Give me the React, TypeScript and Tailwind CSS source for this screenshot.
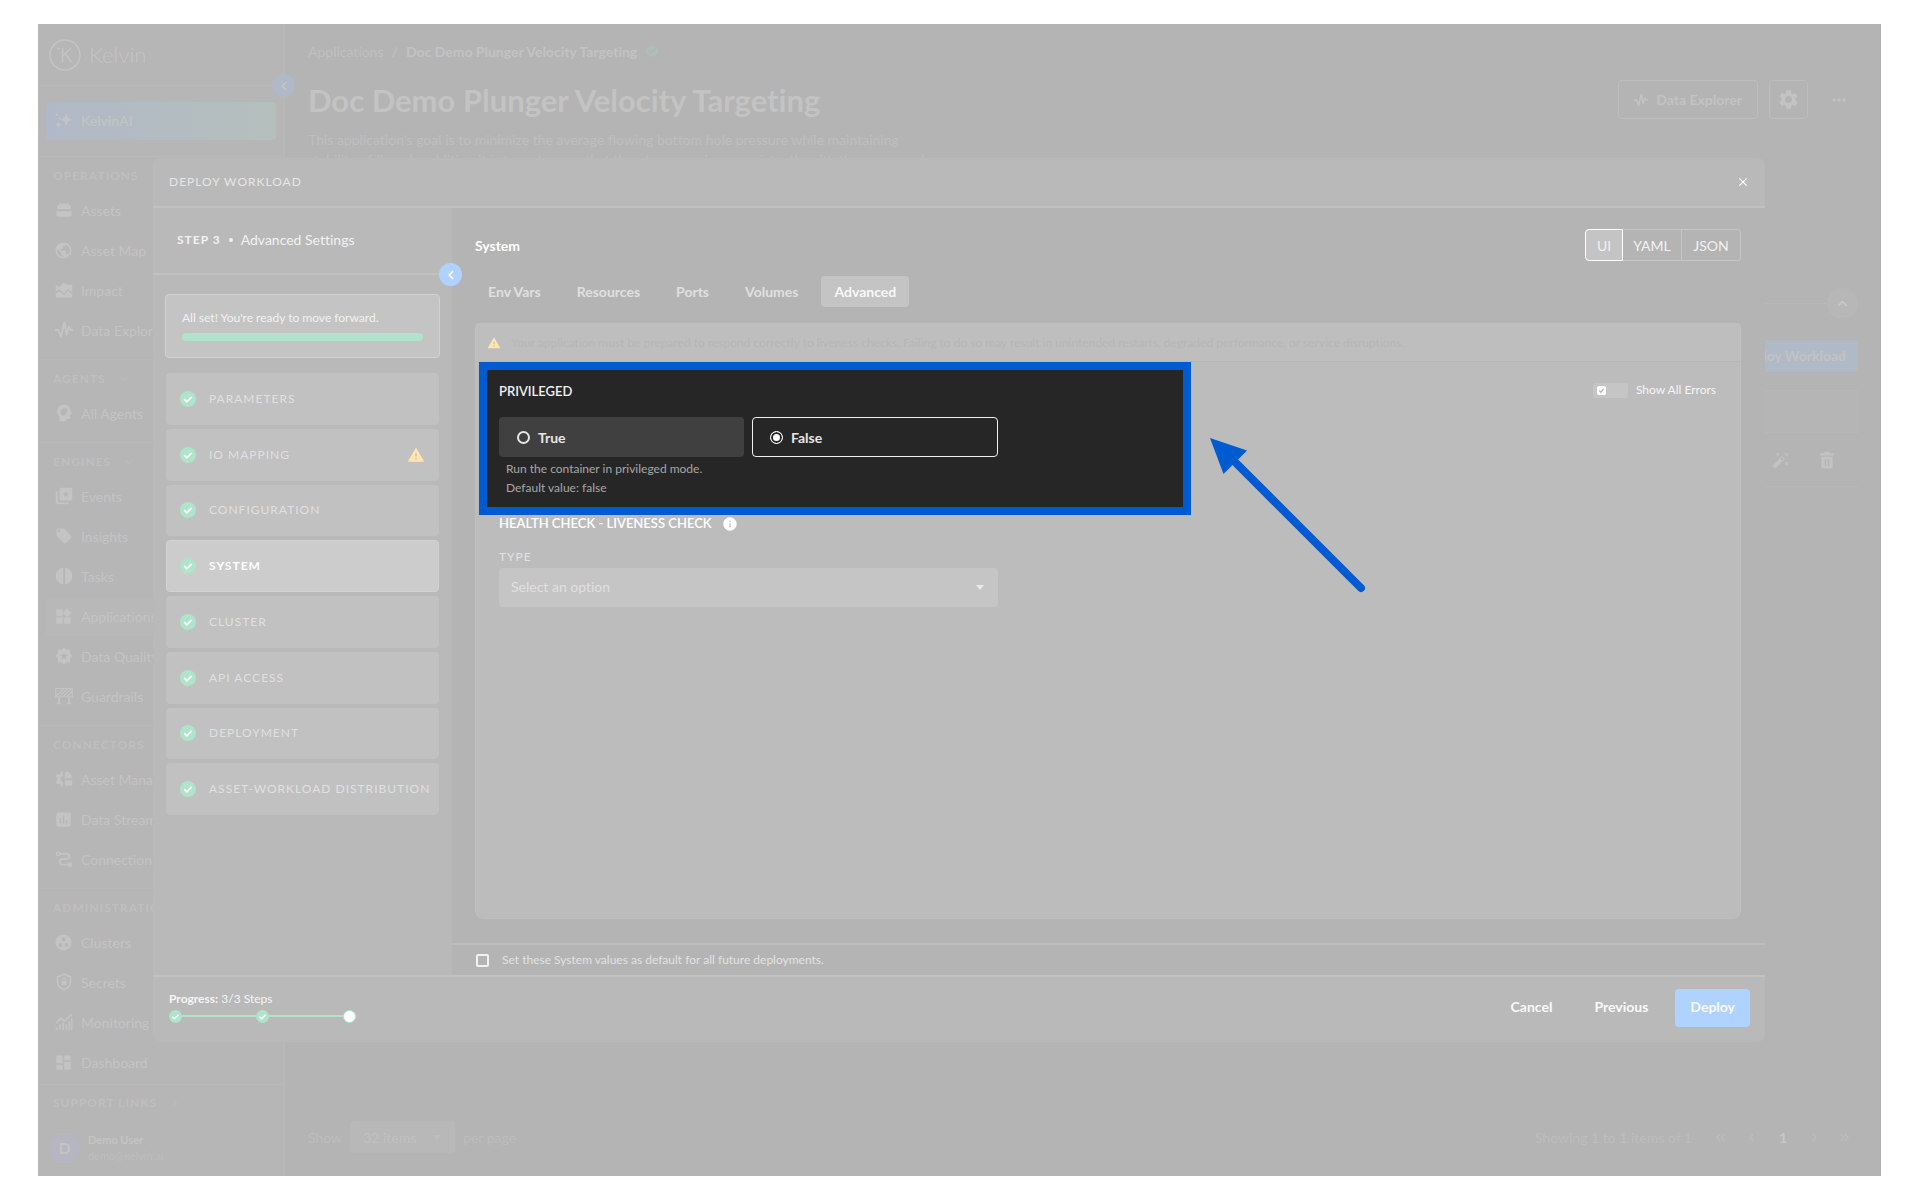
import React from "react";
import type { ReactNode } from "react";
import {
  MdAssessment,
  MdAutoFixHigh,
  MdCheckCircle,
  MdClose,
  MdDashboard,
  MdGroupWork,
  MdInfo,
  MdLocalOffer,
  MdMoreHoriz,
  MdPublic,
  MdSettings,
  MdWarning,
  MdWidgets,
} from "react-icons/md";
import { ChevronDown, ChevronLeft, ChevronRight, ChevronUp, ChevronsLeft, ChevronsRight } from "lucide-react";

function Icon({ children, size = 18 }: { children: ReactNode; size?: number }) {
  return (
    <svg width={size} height={size} viewBox="0 0 24 24" fill="currentColor" aria-hidden="true">
      {children}
    </svg>
  );
}

const AssetsIcon = () => (
  <Icon>
    <path d="M3 11V7a2 2 0 0 1 2-2h1V3h3v2h1.500V3h3v2H15V3h3v2h1a2 2 0 0 1 2 2v4zM2 13.500h20V19a2 2 0 0 1-2 2H4a2 2 0 0 1-2-2z" />
  </Icon>
);
const ImpactIcon = () => (
  <Icon>
    <path d="M1 5l5 3 5-6 6 3h6v10l-6-4-5 5.500L6 11l-5 3z" />
    <path d="M1 22v-5l5-3.500 6 5.500 5.500-6L23 17.500V22z" />
  </Icon>
);
const PulseIcon = ({ size = 18 }: { size?: number }) => (
  <Icon size={size}>
    <path
      d="M0 12h4.500l3.500 9 4.500-19 3 16 3-10 2.500 4H24"
      fill="none"
      stroke="currentColor"
      strokeWidth="2.600"
      strokeLinejoin="round"
    />
  </Icon>
);
const AgentIcon = () => (
  <Icon>
    <path
      fillRule="evenodd"
      d="M12 1c-5 0-9 3.700-9 8.700 0 3 1.300 5.300 3 7V23h9v-3h2.500a2.500 2.500 0 0 0 2.500-2.500V14l2.300-.800c.500-.2.600-.700.300-1.200L21 9.500C20.700 4.700 17 1 12 1zm4.500 4.500c.4 4.500-1 8-4 9.500-1.500.7-3 .3-4-.5-1.500-2-1.700-4.500-.3-6.500 1.800-2.300 5-2.300 8.300-2.500z"
    />
  </Icon>
);
const EventsIcon = () => (
  <Icon>
    <path d="M1 6h2.500v12.500a2 2 0 0 0 2 2H18V23H4a3 3 0 0 1-3-3z" />
    <path
      fillRule="evenodd"
      d="M8 1h13a2 2 0 0 1 2 2v13a2 2 0 0 1-2 2H8a2 2 0 0 1-2-2V3a2 2 0 0 1 2-2zm6.500 4l-1.200 3-3.300.2 2.500 2.100-.8 3.200 2.800-1.700 2.800 1.700-.8-3.200L19 8.200 15.700 8z"
    />
  </Icon>
);
const TasksIcon = () => (
  <Icon>
    <path d="M11 1v22H9l-6-4-2-5v-4l2-5 6-4zM13.500 1v22H15l6-4 2-5v-4l-2-5-6-4z" />
  </Icon>
);
const QualityIcon = () => (
  <Icon>
    <path
      fillRule="evenodd"
      d="M12 0.500l3.200 3.300h4.900v4.900L23.500 12l-3.400 3.300v4.900h-4.900L12 23.500l-3.200-3.300H3.900v-4.900L0.500 12l3.400-3.300V3.800h4.900zM12 6.500l-1.500 3.700-4 .3 3.100 2.500-1 3.900L12 14.800l3.400 2.100-1-3.900 3.100-2.500-4-.3z"
    />
  </Icon>
);
const BarrierIcon = () => (
  <Icon>
    <path d="M4 13h2.500v8H8v2H2.500v-2H4zM17.500 13H20v8h1.500v2H16v-2h1.500z" />
    <path d="M1.500 12L11 3M6 12.500L16 3M11 12.500L21 3M16 12.500L23 6" stroke="currentColor" strokeWidth="1.800" />
    <path d="M1 2h22v11H1z" fill="none" stroke="currentColor" strokeWidth="1.500" />
  </Icon>
);
const AssetManagerIcon = () => (
  <Icon>
    <path d="M10.500 2v5.500a4.700 4.700 0 0 0 0 9V22H8l-.600-3-1.800-1-2.800 1L.8 15.500 3 13.500v-3L.8 8.500 2.800 5l2.800 1 1.800-1L8 2z" />
    <path d="M13 3.500l4-1.500 5 4.500V11h-9zM13 13.500h10V19a2 2 0 0 1-2 2h-8z" />
  </Icon>
);
const ConnectionsIcon = () => (
  <Icon>
    <path
      d="M6 5h9.500a3.500 3.500 0 0 1 0 7H10a3.500 3.500 0 0 0 0 7.500h8"
      fill="none"
      stroke="currentColor"
      strokeWidth="2.400"
    />
    <circle cx="4" cy="5" r="2.300" fill="none" stroke="currentColor" strokeWidth="1.800" />
    <circle cx="20" cy="19.500" r="3.200" />
  </Icon>
);
const SecretsIcon = () => (
  <Icon>
    <path
      d="M12 1.800l8.500 3.400v6.300c0 5-3.600 9-8.500 10.700-4.900-1.700-8.500-5.700-8.500-10.700V5.200z"
      fill="none"
      stroke="currentColor"
      strokeWidth="2.200"
    />
    <path d="M8.500 10.500h7V16h-7z" />
    <path d="M10 11V9a2 2 0 0 1 4 0v2" fill="none" stroke="currentColor" strokeWidth="1.500" />
  </Icon>
);
const MonitoringIcon = () => (
  <Icon>
    <path d="M1.500 13.500L8 7l4.500 4L22.500 1.500" fill="none" stroke="currentColor" strokeWidth="2.200" />
    <path d="M1 19h2.200v4H1zM5.500 15h2.200v8H5.500zM9.800 13H12v10H9.800zM14 15h2.200v8H14zM18 11h2.200v12H18zM21.500 7h1.800v16h-1.800z" />
  </Icon>
);
const SparkleIcon = () => (
  <Icon>
    <path d="M15 3l2.200 6L23 11.500 17.200 14 15 20l-2.200-6L7 11.500 12.800 9zM4.500 14l1.200 3L9 18.500l-3.300 1.400L4.500 23l-1.200-3.100L0 18.500 3.300 17z" />
    <circle cx="2.500" cy="5" r="1.800" />
    <circle cx="6.500" cy="9.500" r="1.300" />
  </Icon>
);
const TrashIcon = () => (
  <Icon size={18}>
    <path
      fillRule="evenodd"
      d="M8.500 1h7v2H21v3H3V3h5.500zM4.500 7.500h15V21a2 2 0 0 1-2 2h-11a2 2 0 0 1-2-2zm4.500 3v9h2v-9zm4 0v9h2v-9z"
    />
  </Icon>
);
const CaretIcon = () => (
  <svg width="8" height="5" viewBox="0 0 8 5" fill="currentColor" aria-hidden="true">
    <path d="M0 0h8L4 5z" />
  </svg>
);

type NavItem = { label: string; icon: ReactNode; active?: boolean };
type NavGroup = { title: string; items: NavItem[] };

const navGroups: NavGroup[] = [
  {
    title: "OPERATIONS",
    items: [
      { label: "Assets", icon: <AssetsIcon /> },
      { label: "Asset Map", icon: <MdPublic size={19} /> },
      { label: "Impact", icon: <ImpactIcon /> },
      { label: "Data Explorer", icon: <PulseIcon /> },
    ],
  },
  { title: "AGENTS", items: [{ label: "All Agents", icon: <AgentIcon /> }] },
  {
    title: "ENGINES",
    items: [
      { label: "Events", icon: <EventsIcon /> },
      { label: "Insights", icon: <MdLocalOffer size={18} /> },
      { label: "Tasks", icon: <TasksIcon /> },
      { label: "Applications", icon: <MdWidgets size={19} />, active: true },
      { label: "Data Quality", icon: <QualityIcon /> },
      { label: "Guardrails", icon: <BarrierIcon /> },
    ],
  },
  {
    title: "CONNECTORS",
    items: [
      { label: "Asset Manager", icon: <AssetManagerIcon /> },
      { label: "Data Streams", icon: <MdAssessment size={19} /> },
      { label: "Connections", icon: <ConnectionsIcon /> },
    ],
  },
  {
    title: "ADMINISTRATION",
    items: [
      { label: "Clusters", icon: <MdGroupWork size={19} /> },
      { label: "Secrets", icon: <SecretsIcon /> },
      { label: "Monitoring", icon: <MonitoringIcon /> },
      { label: "Dashboard", icon: <MdDashboard size={19} /> },
    ],
  },
];

function Sidebar() {
  return (
    <aside className="relative flex w-[247px] shrink-0 flex-col border-r border-[#b9b9b9] bg-[#b6b6b6] text-[#c4c4c4]">
      <a href="#home" className="flex h-[62px] shrink-0 items-center gap-2 border-b border-[#b9b9b9] pl-[11px]">
        <svg width="32" height="32" viewBox="0 0 32 32" fill="none" stroke="currentColor" aria-hidden="true">
          <circle cx="16" cy="16" r="15" strokeWidth="1.500" />
          <path d="M13.500 9v14M22 9l-8 7.500M16 14.500l6.500 8.500" strokeWidth="1.500" />
          <circle cx="9.500" cy="9.500" r="0.800" fill="currentColor" />
        </svg>
        <span className="text-[22px] font-light leading-7">Kelvin</span>
      </a>
      <button
        type="button"
        aria-label="Collapse menu"
        className="absolute right-[-11px] top-[50px] z-10 flex size-[23px] items-center justify-center rounded-full bg-[#b0b9c6] text-[#c8c8c8]"
      >
        <ChevronLeft size={14} strokeWidth={2} />
      </button>
      <div className="shrink-0 px-2 py-4">
        <button
          type="button"
          className="flex h-[38px] w-full items-center gap-2 rounded bg-linear-to-r from-[#b0b9c7] to-[#b5bfbc] pb-0.5 pl-[9px] text-left text-[14px] font-medium"
        >
          <SparkleIcon />
          KelvinAI
        </button>
      </div>
      <nav className="min-h-0 flex-1 overflow-hidden">
        {navGroups.map((group) => (
          <section key={group.title} className="border-t border-[#b9b9b9] px-2 pb-[9px]">
            <button
              type="button"
              className="flex h-[35px] items-center gap-3 pl-[7px] pt-0.5 text-[12px] font-bold tracking-[1px] text-[#bfbfbf]"
            >
              {group.title}
              <ChevronDown size={12} />
            </button>
            <ul className="flex flex-col gap-0.5">
              {group.items.map((item) => (
                <li key={item.label}>
                  <a
                    href={"#" + item.label}
                    className={
                      item.active
                        ? "flex h-[38px] items-center gap-2 rounded bg-[#b8b8b8] pb-0.5 pl-2 text-[14px]"
                        : "flex h-[38px] items-center gap-2 rounded pb-0.5 pl-2 text-[14px]"
                    }
                  >
                    <span className="flex size-[19px] items-center justify-center">{item.icon}</span>
                    {item.label}
                  </a>
                </li>
              ))}
            </ul>
          </section>
        ))}
      </nav>
      <button
        type="button"
        className="flex h-9 shrink-0 items-center gap-3 border-t border-[#b9b9b9] pl-[15px] text-[12px] font-bold tracking-[1px] text-[#bfbfbf]"
      >
        SUPPORT LINKS
        <ChevronRight size={12} />
      </button>
      <div className="flex h-14 shrink-0 items-center gap-2 pl-[11px]">
        <span className="flex size-[31px] items-center justify-center rounded-full bg-[#b6b6c2] text-[16px] font-bold">
          D
        </span>
        <div className="flex flex-col text-[11px] leading-4">
          <strong>Demo User</strong>
          <span className="text-[#bdbdbd]">demo@kelvin.ai</span>
        </div>
      </div>
    </aside>
  );
}

function AppPage() {
  return (
    <main className="flex min-w-0 flex-1 flex-col px-[23px] pb-[23px] pt-[17px] text-[#c3c3c3]">
      <nav className="flex h-5 items-center gap-2 text-[14px]">
        <a href="#applications" className="text-[#c0c0c0]">
          Applications
        </a>
        <span>/</span>
        <strong>Doc Demo Plunger Velocity Targeting</strong>
        <MdCheckCircle size={14} className="text-[#adbfb6]" />
      </nav>
      <div className="mt-[19px] flex h-[39px] items-center">
        <h1 className="text-[31px] font-bold leading-9">Doc Demo Plunger Velocity Targeting</h1>
        <button
          type="button"
          className="ml-auto flex h-[39px] items-center gap-2 rounded border border-[#bdbdbd] px-[15px] text-[14px] font-bold"
        >
          <PulseIcon size={14} />
          Data Explorer
        </button>
        <button
          type="button"
          aria-label="Settings"
          className="ml-[11px] flex size-[39px] items-center justify-center rounded border border-[#bdbdbd]"
        >
          <MdSettings size={23} />
        </button>
        <button type="button" aria-label="More" className="ml-[11px] flex size-[39px] items-center justify-center">
          <MdMoreHoriz size={20} />
        </button>
      </div>
      <p className="mt-[11px] h-10 text-[14px] leading-5 text-[#bfbfbf]">
        This application's goal is to minimize the average flowing bottom hole pressure while maintaining
        <br />
        stability of flow. In addition it is to make sure that the plunger arrives consistently with the proper column
      </p>
      <div className="mt-[118px] flex items-center">
        <span className="h-px flex-1 bg-[#b9b9b9]" />
        <button
          type="button"
          aria-label="Collapse section"
          className="flex size-[31px] items-center justify-center rounded-full bg-[#b7b7b7] text-[#c8c8c8]"
        >
          <ChevronUp size={15} strokeWidth={3} />
        </button>
      </div>
      <button
        type="button"
        className="mt-[21px] flex h-8 items-center self-end rounded bg-[#b0b9c6] px-3 pb-0.5 text-[14px] font-bold"
      >
        Deploy Workload
      </button>
      <div className="mt-[18px] h-[43px] border-b border-t border-[#b8b8b8] bg-[#b5b5b5]" />
      <div className="flex h-[54px] items-center justify-end gap-7 border-b border-[#b8b8b8] pr-[22px]">
        <button type="button" aria-label="Edit">
          <MdAutoFixHigh size={18} />
        </button>
        <button type="button" aria-label="Delete">
          <TrashIcon />
        </button>
      </div>
      <div className="mt-auto flex h-8 items-center text-[14px] text-[#bdbdbd]">
        <label htmlFor="page-size">Show</label>
        <span className="relative ml-2 flex items-center">
          <select
            id="page-size"
            className="h-8 w-[105px] appearance-none rounded bg-[#b8b8b8] pl-[13px] text-[14px] text-[#c1c1c1]"
          >
            <option>32 items</option>
          </select>
          <span className="pointer-events-none absolute right-3.5">
            <CaretIcon />
          </span>
        </span>
        <span className="ml-2">per page</span>
        <span className="ml-auto">Showing 1 to 1 items of 1</span>
        <button type="button" aria-label="First page" className="ml-5 flex w-4 justify-center">
          <ChevronsLeft size={15} />
        </button>
        <button type="button" aria-label="Previous page" className="ml-[15px] flex w-4 justify-center">
          <ChevronLeft size={13} />
        </button>
        <strong className="ml-4 w-4 text-center text-[#c8c8c8]">1</strong>
        <button type="button" aria-label="Next page" className="ml-[15px] flex w-4 justify-center">
          <ChevronRight size={13} />
        </button>
        <button type="button" aria-label="Last page" className="ml-3.5 mr-1.5 flex w-4 justify-center">
          <ChevronsRight size={15} />
        </button>
      </div>
    </main>
  );
}

function DoneMark({ size }: { size: number }) {
  return (
    <svg width={size} height={size} viewBox="0 0 16 16" aria-hidden="true" className="shrink-0">
      <circle cx="8" cy="8" r="8" fill="#b0e3cb" />
      <path d="M4.200 8.200l2.600 2.600 5-5" fill="none" stroke="#fff" strokeWidth="1.800" />
    </svg>
  );
}

const steps = [
  { label: "PARAMETERS" },
  { label: "IO MAPPING", warning: true },
  { label: "CONFIGURATION" },
  { label: "SYSTEM", active: true },
  { label: "CLUSTER" },
  { label: "API ACCESS" },
  { label: "DEPLOYMENT" },
  { label: "ASSET-WORKLOAD DISTRIBUTION" },
];

function StepPane() {
  return (
    <aside className="relative flex w-[299px] shrink-0 flex-col bg-[#b9b9b9]">
      <div className="flex h-[67px] shrink-0 items-center gap-2 border-b-2 border-[#c1c1c1] pb-0.5 pl-6 text-[14px] text-[#f2f2f2]">
        <strong className="text-[12px] tracking-[1px]">STEP 3</strong>
        <span className="size-1 rounded-full bg-[#f2f2f2]" />
        <span>Advanced Settings</span>
      </div>
      <button
        type="button"
        aria-label="Collapse steps"
        className="absolute right-[-10px] top-[55px] z-10 flex size-[23px] items-center justify-center rounded-full bg-[#b0d2ff] text-white"
      >
        <ChevronLeft size={14} strokeWidth={3} />
      </button>
      <div className="mx-3 mt-[19px] h-16 rounded border border-[#d2d2d2] bg-[#c4c4c4] px-4 pt-[15px]">
        <p className="text-[12px] leading-4 text-[#f2f2f2]">All set! You're ready to move forward.</p>
        <div className="mt-[7px] h-2 rounded-sm bg-[#b0e3cb]" />
      </div>
      <ol className="mx-[13px] mt-[15px] flex h-[442px] flex-col gap-1">
        {steps.map((step) => (
          <li key={step.label} className="flex flex-1">
            <button
              type="button"
              className={
                step.active
                  ? "flex w-full items-center gap-[13px] rounded border border-[#d2d2d2] bg-[#cccccc] px-[13px] text-[12px] font-bold tracking-[1px] text-white"
                  : "flex w-full items-center gap-[13px] rounded border border-[#c1c1c1] bg-[#c1c1c1] px-[13px] text-[12px] tracking-[1px] text-[#e0e0e0]"
              }
            >
              <DoneMark size={16} />
              <span className="whitespace-nowrap">{step.label}</span>
              {step.warning && <MdWarning size={18} className="ml-auto text-[#ffe5b0]" />}
            </button>
          </li>
        ))}
      </ol>
    </aside>
  );
}

const tabs = ["Env Vars", "Resources", "Ports", "Volumes", "Advanced"];

function PrivilegedField() {
  return (
    <div
      role="radiogroup"
      aria-labelledby="privileged-title"
      className="ml-[3px] h-[153px] w-[712px] max-w-full border-8 border-[#005bd0] bg-[#262626] pl-3 pt-3"
    >
      <h3 id="privileged-title" className="text-[13px] font-semibold leading-[18px] text-[#f0f0f0]">
        PRIVILEGED
      </h3>
      <div className="mt-[17px] flex gap-2">
        <label className="flex h-10 w-[245px] items-center gap-2 rounded bg-[#404040] pl-[18px] text-[14px] font-bold text-[#e6e6e6]">
          <input
            type="radio"
            name="privileged"
            className="size-[13px] appearance-none rounded-full border-2 border-[#e6e6e6]"
          />
          True
        </label>
        <label className="flex h-10 w-[246px] items-center gap-2 rounded border border-[#f0f0f0] pl-[17px] text-[14px] font-bold text-[#e6e6e6]">
          <input
            type="radio"
            name="privileged"
            defaultChecked
            className="size-[13px] appearance-none rounded-full border border-white bg-white shadow-[inset_0_0_0_2px_#262626]"
          />
          False
        </label>
      </div>
      <p className="pl-[7px] pt-0.5 text-[12px] leading-[19px] text-[#a6a6a6]">
        Run the container in privileged mode.
        <br />
        Default value: false
      </p>
    </div>
  );
}

function SettingsPane() {
  return (
    <section className="flex min-w-0 flex-1 flex-col bg-[#b4b4b4]">
      <div className="flex flex-1 flex-col pb-6 pl-[23px] pr-6 pt-[21px]">
        <div className="flex h-8 items-center justify-between">
          <h2 className="text-[14px] font-bold text-white">System</h2>
          <div className="flex h-8 text-[14px] text-[#f2f2f2]">
            <button type="button" className="w-[38px] rounded-l border border-white bg-[#c4c4c4]">
              UI
            </button>
            <button type="button" className="w-[59px] border border-l-0 border-[#c6c6c6]">
              YAML
            </button>
            <button type="button" className="w-[59px] rounded-r border border-l-0 border-[#c6c6c6]">
              JSON
            </button>
          </div>
        </div>
        <div role="tablist" className="mt-[15px] flex gap-2.5 text-[14px] font-bold">
          {tabs.map((tab) => (
            <button
              key={tab}
              type="button"
              role="tab"
              aria-selected={tab === "Advanced"}
              className={
                tab === "Advanced"
                  ? "h-[31px] rounded bg-[#c4c4c4] px-[13px] text-[#f8f8f8]"
                  : "h-[31px] rounded px-[13px] text-[#e0e0e0]"
              }
            >
              {tab}
            </button>
          ))}
        </div>
        <div className="relative mt-4 flex flex-1 flex-col rounded-b-lg rounded-t border border-[#bfbfbf] bg-[#bcbcbc]">
          <div className="flex h-[37px] items-center gap-2.5 rounded-t bg-[#bebebe] pl-[11px]">
            <MdWarning size={14} className="text-[#ffe5b0]" />
            <span className="text-[12px] text-[#b6b6b6]">
              Your application must be prepared to respond correctly to liveness checks. Failing to do so may result in
              unintended restarts, degraded performance, or service disruptions.
            </span>
          </div>
          <div className="flex items-start justify-between border-t border-[#b7b7b7]">
            <PrivilegedField />
            <label className="relative mr-6 mt-5 flex items-center gap-2 text-[12px] leading-4 text-[#f5f5f5]">
              <input type="checkbox" className="h-[15px] w-[35px] appearance-none rounded-xs bg-[#c5c5c5]" />
              <span className="pointer-events-none absolute left-1 flex size-[9px] items-center justify-center rounded-[2px] bg-white">
                <svg width="7" height="7" viewBox="0 0 8 8" fill="none" stroke="#b0b0b0" strokeWidth="1.500" aria-hidden="true">
                  <path d="M1.500 4.200l1.800 1.800 3.200-3.800" />
                </svg>
              </span>
              Show All Errors
            </label>
          </div>
          <div className="flex flex-col pl-[23px]">
            <h3 className="flex h-[18px] items-center gap-2.5 text-[13px] font-semibold text-white">
              HEALTH CHECK - LIVENESS CHECK
              <MdInfo size={16} />
            </h3>
            <label htmlFor="check-type" className="mt-4 text-[12px] leading-4 tracking-[1px] text-[#e2e2e2]">
              TYPE
            </label>
            <span className="relative mt-[3px] flex w-[499px] max-w-full items-center text-[#eaeaea]">
              <select
                id="check-type"
                className="h-[39px] w-full appearance-none rounded bg-[#c5c5c5] pb-0.5 pl-3 text-[14px] text-[#e0e0e0]"
              >
                <option>Select an option</option>
              </select>
              <span className="pointer-events-none absolute right-3.5">
                <CaretIcon />
              </span>
            </span>
          </div>
          <svg
            width="160"
            height="160"
            viewBox="0 0 160 160"
            aria-hidden="true"
            className="pointer-events-none absolute left-[734px] top-[113px]"
          >
            <path d="M24 24L151 151" stroke="#005bd0" strokeWidth="8" strokeLinecap="round" />
            <path d="M0 1l37 12.500L13.500 37z" fill="#005bd0" />
          </svg>
        </div>
      </div>
      <label className="flex h-8 shrink-0 items-center gap-[13px] border-t-2 border-[#bdbdbd] pl-6 text-[12px] text-[#e2e2e2]">
        <input type="checkbox" className="size-[13px] appearance-none rounded-xs border-2 border-[#f2f2f2]" />
        Set these System values as default for all future deployments.
      </label>
    </section>
  );
}

function DeployDialog() {
  return (
    <div
      role="dialog"
      aria-label="Deploy workload"
      className="flex h-full w-full flex-col overflow-hidden rounded-lg bg-[#b9b9b9]"
    >
      <header className="flex h-[50px] shrink-0 items-center justify-between border-b-2 border-[#c1c1c1] pl-4 pr-[15px]">
        <h2 className="text-[12px] tracking-[1px] text-[#e6e6e6]">DEPLOY WORKLOAD</h2>
        <button type="button" aria-label="Close" className="text-white">
          <MdClose size={14} />
        </button>
      </header>
      <div className="flex min-h-0 flex-1">
        <StepPane />
        <SettingsPane />
      </div>
      <footer className="flex h-[67px] shrink-0 items-center border-t-2 border-[#c2c2c2] pl-4 pr-[15px]">
        <div className="flex flex-col gap-[3px] pb-1.5">
          <p className="text-[12px] leading-4 text-[#f5f5f5]">
            <strong>Progress:</strong> 3/3 Steps
          </p>
          <div className="flex items-center">
            <DoneMark size={13} />
            <span className="h-0.5 w-[74px] bg-[#b0e3cb]" />
            <DoneMark size={13} />
            <span className="h-0.5 w-[74px] bg-[#b0e3cb]" />
            <span className="size-[13px] rounded-full border border-[#b0e3cb] bg-white" />
          </div>
        </div>
        <div className="ml-auto flex gap-3 pb-1 text-[14px] font-bold text-[#fafafa]">
          <button type="button" className="h-[38px] px-[15px] pb-0.5">
            Cancel
          </button>
          <button type="button" className="h-[38px] px-[15px] pb-0.5">
            Previous
          </button>
          <button type="button" className="h-[38px] rounded bg-[#b0d2ff] px-[15px] pb-0.5">
            Deploy
          </button>
        </div>
      </footer>
    </div>
  );
}

export default function App() {
  return (
    <div className="h-screen bg-white py-6 pl-[38px] pr-[39px] font-['Lato',sans-serif] [font-variant-ligatures:none]">
      <div className="relative flex h-full overflow-hidden bg-[#b4b4b4]">
        <Sidebar />
        <AppPage />
        <div className="absolute inset-0 z-20 py-[134px] pl-[115px] pr-[116px]">
          <DeployDialog />
        </div>
      </div>
    </div>
  );
}
